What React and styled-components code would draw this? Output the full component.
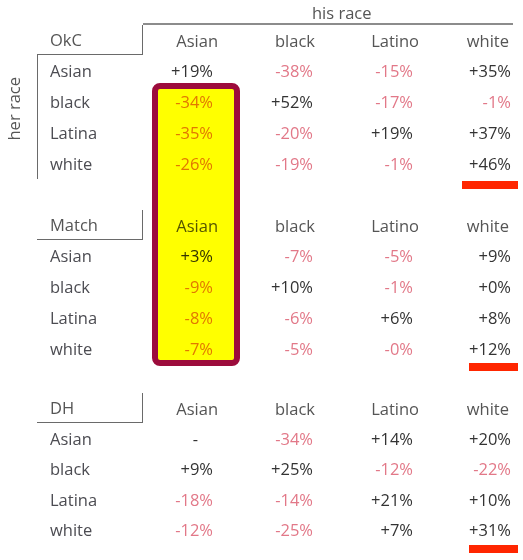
import React from "react";
import styled, { createGlobalStyle } from "styled-components";

const Global = createGlobalStyle`
  html, body {
    margin: 0;
    background: #fff;
  }
  body {
    font-family: "Open Sans", "DejaVu Sans", sans-serif;
    font-size: 16.5px;
  }
`;

const Page = styled.div`
  position: relative;
  width: 523px;
  height: 560px;
  overflow: hidden;
`;

const HisRace = styled.div`
  margin-left: 143px;
  width: 370px;
  height: 25px;
  box-sizing: border-box;
  padding-left: 169px;
  line-height: 25px;
  color: #555;
  border-bottom: 2px solid #8c8c8c;
`;

const Section = styled.div`
  display: grid;
  grid-template-columns: 37px 106px 100px 100px 100px 70px;
  grid-template-rows: 30px repeat(4, ${(p) => p.$rh}px) ${(p) => p.$tail}px;
`;

const SideLabel = styled.div`
  grid-column: 1;
  grid-row: 2 / span 4;
  align-self: start;
  justify-self: start;
  margin-top: 22px;
  margin-left: 5px;
  writing-mode: vertical-rl;
  transform: rotate(180deg);
  line-height: 18px;
  color: #555;
`;

const Corner = styled.div`
  grid-column: 2;
  display: flex;
  align-items: center;
  padding-left: 13px;
  color: #555;
  border-right: 1.5px solid #6a6a6a;
  border-bottom: 1.5px solid #6a6a6a;
`;

const RowLabel = styled.div`
  grid-column: 2;
  display: flex;
  align-items: center;
  padding-left: ${(p) => (p.$ruled ? 12 : 13)}px;
  color: #4c4c52;
  border-left: ${(p) => (p.$ruled ? "1.5px solid #6a6a6a" : "none")};
`;

const Cell = styled.div`
  display: flex;
  align-items: center;
  justify-content: flex-end;
  padding-right: ${(p) => p.$pad}px;
  color: ${(p) => (p.$head ? "#555" : p.$neg ? "#e27888" : "#333")};
  white-space: nowrap;
`;

const Mark = styled.div`
  grid-column: 6;
  align-self: start;
  height: 8px;
  width: ${(p) => p.$w}px;
  margin-left: ${(p) => 75 - p.$w}px;
  margin-top: ${(p) => p.$top}px;
  background: #ff2600;
`;

const Highlight = styled.div`
  position: absolute;
  left: 152px;
  top: 83px;
  width: 88px;
  height: 283px;
  box-sizing: border-box;
  border: 6px solid #9c0c3c;
  border-radius: 8px;
  background: #ffff00;
  mix-blend-mode: multiply;
  pointer-events: none;
`;

const cols = ["Asian", "black", "Latino", "white"];
const headPad = [25, 28, 24, 4];
const valPad = [30, 30, 30, 2];
const rows = ["Asian", "black", "Latina", "white"];

const tables = [
  {
    name: "OkC",
    rh: 31,
    tail: 31,
    mark: { w: 56, top: 2 },
    data: [
      ["+19%", "-38%", "-15%", "+35%"],
      ["-34%", "+52%", "-17%", "-1%"],
      ["-35%", "-20%", "+19%", "+37%"],
      ["-26%", "-19%", "-1%", "+46%"],
    ],
  },
  {
    name: "Match",
    rh: 31,
    tail: 29,
    mark: { w: 49, top: -1 },
    data: [
      ["+3%", "-7%", "-5%", "+9%"],
      ["-9%", "+10%", "-1%", "+0%"],
      ["-8%", "-6%", "+6%", "+8%"],
      ["-7%", "-5%", "-0%", "+12%"],
    ],
  },
  {
    name: "DH",
    rh: 30.5,
    tail: 15,
    mark: { w: 49, top: 0 },
    data: [
      ["-", "-34%", "+14%", "+20%"],
      ["+9%", "+25%", "-12%", "-22%"],
      ["-18%", "-14%", "+21%", "+10%"],
      ["-12%", "-25%", "+7%", "+31%"],
    ],
  },
];

function Table({ t, first }) {
  return (
    <Section $rh={t.rh} $tail={t.tail}>
      {first && <SideLabel>her race</SideLabel>}
      <Corner>{t.name}</Corner>
      {cols.map((c, i) => (
        <Cell key={c} $head $pad={headPad[i]}>
          {c}
        </Cell>
      ))}
      {rows.map((r, ri) => (
        <React.Fragment key={r}>
          <RowLabel $ruled={first}>{r}</RowLabel>
          {t.data[ri].map((v, ci) => (
            <Cell
              key={ci}
              $neg={v.startsWith("-") && v.length > 1}
              $pad={v === "-" ? 45 : valPad[ci]}
            >
              {v}
            </Cell>
          ))}
        </React.Fragment>
      ))}
      <Mark $w={t.mark.w} $top={t.mark.top} />
    </Section>
  );
}

export default function App() {
  return (
    <Page>
      <Global />
      <HisRace>his race</HisRace>
      {tables.map((t, i) => (
        <Table key={t.name} t={t} first={i === 0} />
      ))}
      <Highlight />
    </Page>
  );
}
